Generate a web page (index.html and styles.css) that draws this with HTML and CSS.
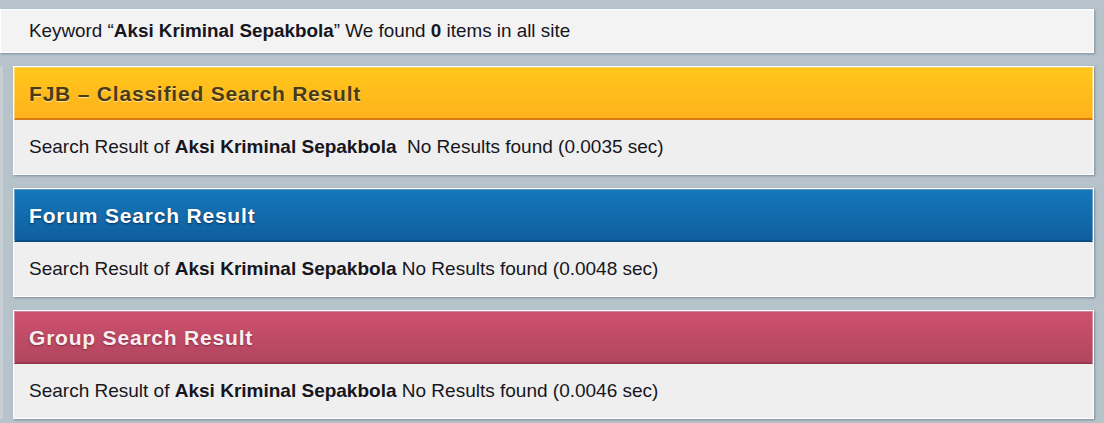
FILE: index.html
```html
<!DOCTYPE html>
<html>
<head>
<meta charset="utf-8">
<link rel="stylesheet" href="styles.css">
</head>
<body>
<div class="page">
  <div class="keyword">Keyword “<b>Aksi Kriminal Sepakbola</b>” We found <b>0</b> items in all site</div>
  <div class="results">
    <section class="panel fjb">
      <h2 class="panel-head">FJB – Classified Search Result</h2>
      <div class="panel-body">Search Result of <b>Aksi Kriminal Sepakbola</b>&nbsp; No Results found (0.0035 sec)</div>
    </section>
    <section class="panel forum">
      <h2 class="panel-head">Forum Search Result</h2>
      <div class="panel-body">Search Result of <b>Aksi Kriminal Sepakbola</b> No Results found (0.0048 sec)</div>
    </section>
    <section class="panel group">
      <h2 class="panel-head">Group Search Result</h2>
      <div class="panel-body">Search Result of <b>Aksi Kriminal Sepakbola</b> No Results found (0.0046 sec)</div>
    </section>
  </div>
</div>
</body>
</html>
```

FILE: styles.css
```css
html, body {
  margin: 0;
  padding: 0;
}
body {
  background: #b6c3cb;
  font-family: "Liberation Sans", Arial, sans-serif;
  color: #16161e;
  width: 1104px;
  height: 423px;
  overflow: hidden;
}
.page {
  padding: 9px 10px 0 0;
  display: flex;
  flex-direction: column;
  gap: 13px;
}
.keyword {
  background: #f3f3f3;
  border: 1px solid #ffffff;
  box-shadow: 1px 1px 2px rgba(80, 95, 105, 0.55);
  height: 42px;
  line-height: 42px;
  padding-left: 28px;
  font-size: 18.85px;
  white-space: nowrap;
}
.results {
  display: flex;
  flex-direction: column;
  gap: 13px;
  padding-left: 10px;
  border-left: 3px solid #c8cfd4;
}
.panel {
  border: 1px solid #ffffff;
  box-shadow: 1px 1px 2px rgba(80, 95, 105, 0.55);
  background: #efefef;
}
.panel-head {
  margin: 0;
  height: 50px;
  line-height: 52px;
  padding-left: 14px;
  font-size: 21px;
  font-weight: bold;
  letter-spacing: 0.8px;
  border: 1px solid rgba(255, 255, 255, 0.35);
  border-bottom: 2px solid #000;
  white-space: nowrap;
  overflow: hidden;
}
.panel-body {
  height: 54px;
  line-height: 54px;
  padding-left: 15px;
  font-size: 19px;
  white-space: pre;
}
.fjb .panel-head {
  background: linear-gradient(#ffc71b, #ffb11c);
  color: #4b3a12;
  text-shadow: 0 1px 1px rgba(255, 240, 190, 0.8);
  border-bottom-color: #d87a12;
}
.forum .panel-head {
  background: linear-gradient(#1677bb, #0f5f9d);
  color: #ffffff;
  text-shadow: 0 1px 2px rgba(0, 30, 70, 0.8);
  border-bottom-color: #0a4d80;
}
.group .panel-head {
  background: linear-gradient(#cd516f, #b2465f);
  color: #fbeef1;
  text-shadow: 0 1px 2px rgba(90, 20, 40, 0.6);
  border-bottom-color: #993650;
}
```
